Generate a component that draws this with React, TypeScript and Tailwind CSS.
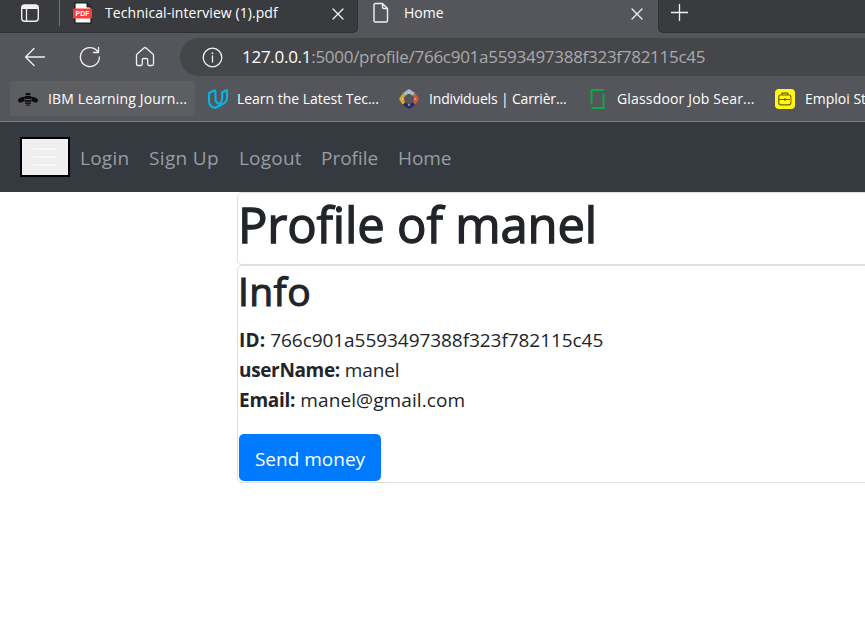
import React from 'react';

const stroke = { fill: 'none', stroke: '#f1f1f1', strokeWidth: 1.3, strokeLinecap: 'round', strokeLinejoin: 'round' } as const;

function Close() {
  return <svg width="12" height="12" viewBox="0 0 12 12" {...stroke}><path d="M1 1l10 10M11 1L1 11" /></svg>;
}

function Tabs() {
  return (
    <div className="flex h-[33px] bg-[#55565b] text-sm text-white">
      <div className="flex h-[33px] w-[358px] shrink-0 rounded-br-[5px] border-b border-r border-[#303135] bg-[#3a3b3e]">
        <svg className="ml-[20px] mt-[4px] shrink-0" width="20" height="19" viewBox="0 0 20 19">
          <rect x="1.7" y="1" width="16.6" height="16.3" rx="3" fill="none" stroke="#f1f1f1" strokeWidth="1.4" />
          <path d="M2 5V3.500Q2 1 4.500 1h11Q18 1 18 3.500V5z" fill="#f1f1f1" /><path d="M6.500 5v12" stroke="#f1f1f1" strokeWidth="1.3" />
        </svg>
        <div className="ml-[19px] h-[26px] w-px shrink-0 bg-[#737477]" />
        <svg className="ml-[13px] mt-[2px] shrink-0" width="20" height="22" viewBox="0 0 20 22">
          <path d="M2 1h12l4 4v16H2z" fill="#fff" stroke="#151515" strokeWidth="1.2" />
          <path d="M14 1v4h4" fill="#333" stroke="#151515" />
          <rect x="0" y="6.500" width="19" height="10" rx="1" fill="#fb3b3b" />
          <text x="9.500" y="14" textAnchor="middle" fill="#fff" fontSize="7" fontWeight="700" fontFamily="Liberation Sans, sans-serif" textLength="14">PDF</text>
        </svg>
        <span className="ml-[12px] mt-[3px] w-[227px] whitespace-nowrap leading-5 tracking-[0.07px]">Technical-interview (1).pdf</span>
        <span className="mt-[8px]"><Close /></span>
      </div>
      <div className="flex w-[300px] shrink-0">
        <svg className="ml-[15px] mt-[2px] shrink-0" width="16" height="22" viewBox="0 0 16 22" {...stroke} strokeWidth="1.4">
          <path d="M2.500 1.500H9.500L14.500 6.500V18.500Q14.500 20 13 20H2.500Q1 20 1 18.500V3Q1 1.500 2.500 1.500zM9.500 1.500V5Q9.500 6.500 11 6.500H14.500" />
        </svg>
        <span className="ml-[15px] mt-[3px] w-[227px] leading-5">Home</span>
        <span className="mt-[8px]"><Close /></span>
      </div>
      <div className="flex-1 rounded-bl-[5px] border-b border-l border-[#303135] bg-[#3a3b3e]">
        <svg className="ml-[11px] mt-[3px]" width="19" height="19" viewBox="0 0 19 19"><path d="M1 9.500h17M9.500 1v17" stroke="#f1f1f1" strokeWidth="1.3" /></svg>
      </div>
    </div>
  );
}

function AddressBar() {
  return (
    <div className="flex h-[48px] items-center bg-[#55565b]">
      <svg className="ml-[24px] shrink-0" width="22" height="20" viewBox="0 0 22 20" {...stroke}><path d="M10 1.500L1.500 10L10 18.500M1.500 10H20.500" /></svg>
      <svg className="ml-[33px] shrink-0" width="22" height="22" viewBox="0 0 22 22" {...stroke}><path d="M20.400 11A9.500 9.500 0 1 1 18.600 5.500M19.500 1.500V6.500H14.500" /></svg>
      <svg className="ml-[33px] shrink-0" width="22" height="22" viewBox="0 0 22 22" {...stroke}><path d="M2.500 9.300Q2.500 8.500 3.100 8L10 1.900Q11 1 12 1.900L18.900 8Q19.500 8.500 19.500 9.300V18Q19.500 19.500 18 19.500H15Q13.700 19.500 13.700 18V14Q13.700 12.500 12.300 12.500H9.700Q8.300 12.500 8.300 14V18Q8.300 19.500 7 19.500H4Q2.500 19.500 2.500 18z" /></svg>
      <div className="ml-[24px] flex h-[38px] flex-1 items-center rounded-l-[19px] bg-[#454649]">
        <svg className="ml-[22px] shrink-0" width="21" height="21" viewBox="0 0 21 21" {...stroke}><circle cx="10.500" cy="10.500" r="9.300" /><path d="M10.500 9v6" /><path d="M10.500 6v.3" strokeWidth="1.700" /></svg>
        <span className="ml-[19px] whitespace-nowrap text-[17px] leading-6 tracking-[-0.28px] text-[#aaa]"><span className="text-white">127.0.0.1</span>:5000/profile/766c901a5593497388f323f782115c45</span>
      </div>
    </div>
  );
}

function Bee() {
  return (
    <svg width="20" height="20" viewBox="0 0 20 20" fill="#0c0c0d">
      <ellipse cx="3.300" cy="11" rx="3.300" ry="2.300" transform="rotate(-20 3.300 11)" /><ellipse cx="16.700" cy="11" rx="3.300" ry="2.300" transform="rotate(20 16.700 11)" />
      <path d="M3 8.500L8 7.500V9.500H5zM17 8.500L12 7.500V9.500H15z" />
      <rect x="7.500" y="4" width="5" height="2.200" rx="1" /><rect x="6.800" y="7" width="6.400" height="3" rx="1" /><rect x="6.500" y="11" width="7" height="1.700" /><rect x="7" y="13.500" width="6" height="1.300" /><rect x="8.300" y="15.500" width="3.400" height="1.200" />
    </svg>
  );
}

function Udacity() {
  return (
    <svg width="22" height="22" viewBox="0 0 22 22" fill="none" stroke="#08b4e6" strokeWidth="2.100" strokeLinejoin="round">
      <path d="M6.500 2.800L2 5.200V13Q2 18.500 8 20L14.500 16.500Q8.500 15.800 8.500 11V4Q8.500 2 6.500 2.800zM14.500 16.500Q20 14.500 20 9.500V2L15 4.500V11Q15 13.800 12.500 15.500" />
    </svg>
  );
}

function Compass() {
  return (
    <svg width="20" height="20" viewBox="0 0 20 20" fill="none" strokeWidth="3.500">
      <path d="M5 5.500L10 2L15 5.500" stroke="#9fbcc8" strokeLinejoin="round" /><path d="M15 5.500L18 10L15 14.500" stroke="#d9563d" strokeLinejoin="round" />
      <path d="M15 14.500L10 18L5 14.500" stroke="#2d2a66" strokeLinejoin="round" /><path d="M5 14.500L2 10L5 5.500" stroke="#d8a62f" strokeLinejoin="round" />
      <path d="M10 3v2M15 10h2M10 15v2M3 10h2" stroke="#ddd" strokeWidth="1" />
    </svg>
  );
}

function Bookmarks() {
  return (
    <div className="flex h-[41px] items-start border-b border-[#7c7d80] bg-[#55565b] text-sm leading-5 text-white">
      <div className="ml-[10px] flex h-[35px] w-[185px] shrink-0 items-center rounded-[3px] bg-[#5d5e62]"><span className="ml-[8px]"><Bee /></span><span className="ml-[10px] whitespace-nowrap tracking-[0.15px]">IBM Learning Journ...</span></div>
      <div className="ml-[12px] flex h-[35px] w-[192px] shrink-0 items-center"><Udacity /><span className="ml-[8px] whitespace-nowrap tracking-[-0.03px]">Learn the Latest Tec...</span></div>
      <div className="flex h-[35px] w-[190px] shrink-0 items-center"><Compass /><span className="ml-[10px] whitespace-nowrap tracking-[-0.17px]">Individuels | Carrièr...</span></div>
      <div className="flex h-[35px] w-[186px] shrink-0 items-center">
        <svg className="shrink-0" width="18" height="22" viewBox="0 0 18 22" fill="none" stroke="#0caa41" strokeWidth="2" strokeLinejoin="round"><path d="M15 2H2.500V16.500M2.500 20H14.500V5.500" /></svg>
        <span className="ml-[10px] whitespace-nowrap tracking-[0.17px]">Glassdoor Job Sear...</span>
      </div>
      <div className="flex h-[35px] min-w-0 items-center overflow-hidden">
        <svg className="shrink-0" width="20" height="20" viewBox="0 0 20 20"><rect width="20" height="20" rx="4" fill="#fff914" /><g fill="none" stroke="#68600a" strokeWidth="1.200"><rect x="3.800" y="6" width="12" height="9.800" rx="1.500" /><path d="M7 6V4.200h5.700V6M4 10.500h12M10 9v3" /></g><path d="M15.800 8v5.500" stroke="#ff9200" strokeWidth="1.400" /></svg>
        <span className="ml-[10px] whitespace-nowrap">Emploi St</span>
      </div>
    </div>
  );
}

export default function App() {
  return (
    <main className="h-[622px] w-full overflow-hidden bg-white font-['Open_Sans','Noto_Sans',sans-serif]">
      <Tabs />
      <AddressBar />
      <Bookmarks />
      <nav className="flex h-[70px] items-center bg-[#343a40] pl-[20px] text-[19px] text-[#999da0]">
        <button className="flex h-[40px] w-[50px] shrink-0 flex-col items-center justify-center gap-[6px] border-2 border-black bg-[#efefef]">
          <span className="h-[2px] w-[24px] bg-[#f7f7f7]" /><span className="h-[2px] w-[24px] bg-[#f7f7f7]" /><span className="h-[2px] w-[24px] bg-[#f7f7f7]" />
        </button>
        <a className="ml-[10px] mt-[2px] w-[69px] tracking-[0.25px]">Login</a><a className="mt-[2px] w-[90px] whitespace-nowrap tracking-[0.35px]">Sign Up</a><a className="mt-[2px] w-[82px] tracking-[0.2px]">Logout</a><a className="mt-[2px] w-[77px]">Profile</a><a className="mt-[2px] tracking-[-0.1px]">Home</a>
      </nav>
      <div className="ml-[237px] w-[700px] text-[#212529]">
        <section className="h-[73px] rounded-[5px] border border-[#dfdfdf]">
          <h1 className="mt-px whitespace-nowrap text-[49px] font-normal leading-[60px] tracking-[-0.17px] [-webkit-text-stroke:1.3px_#212529]">Profile of manel</h1>
        </section>
        <section className="h-[218px] rounded-[5px] border border-[#dfdfdf] pl-px">
          <h2 className="-ml-px text-[39px] font-normal leading-[50px] tracking-[0.4px] [-webkit-text-stroke:1.1px_#212529]">Info</h2>
          <div className="mt-[9px] whitespace-nowrap text-[19px] leading-[30px]">
            <p className="tracking-[-0.06px]"><strong className="tracking-[0.2px]">ID:</strong> 766c901a5593497388f323f782115c45</p>
            <p className="tracking-[-0.1px]"><strong className="tracking-[-0.35px]">userName:</strong> manel</p>
            <p className="tracking-[0.09px]"><strong className="tracking-[-0.25px]">Email:</strong> manel@gmail.com</p>
          </div>
          <button className="mt-[19px] block h-[47px] w-[142px] rounded-[5px] bg-[#007bff] pt-[4px] text-[19px] text-white">Send money</button>
        </section>
      </div>
    </main>
  );
}
